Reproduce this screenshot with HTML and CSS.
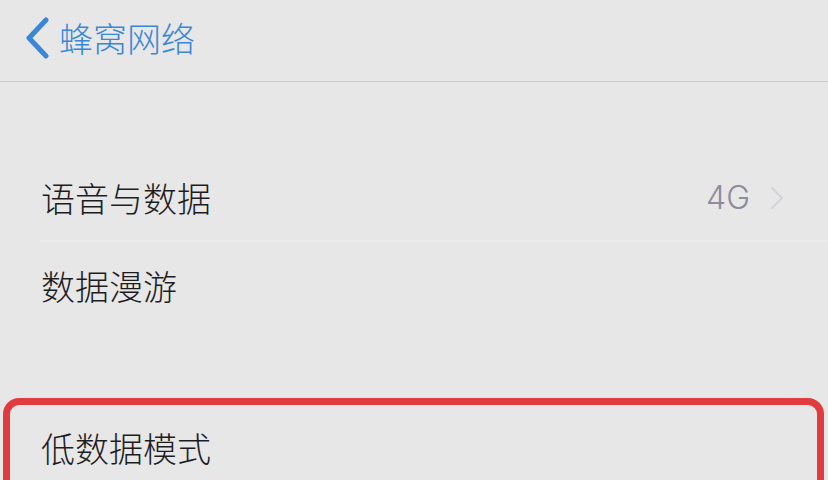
FILE: index.html
```html
<!DOCTYPE html>
<html lang="zh-CN">
<head>
<meta charset="utf-8">
<title>蜂窝网络</title>
<link rel="stylesheet" href="styles.css">
</head>
<body>
<header class="nav">
  <div class="back">
    <svg class="back-icon" width="26" height="42" viewBox="0 0 26 42">
      <path d="M22 3 L5 21 L22 39" fill="none" stroke="#3a87d6" stroke-width="5" stroke-linecap="round" stroke-linejoin="round"/>
    </svg>
    <span class="back-label">蜂窝网络</span>
  </div>
</header>
<main class="content">
  <section class="group">
    <div class="row sep">
      <span class="label">语音与数据</span>
      <span class="detail">
        <span class="value">4G</span>
        <svg class="chev" width="14" height="24" viewBox="0 0 14 24">
          <path d="M2 2 L12 12 L2 22" fill="none" stroke="#d2d2d8" stroke-width="2" stroke-linecap="round" stroke-linejoin="round"/>
        </svg>
      </span>
    </div>
    <div class="row">
      <span class="label">数据漫游</span>
    </div>
  </section>
  <section class="highlight">
    <div class="row inner">
      <span class="label">低数据模式</span>
    </div>
  </section>
</main>
</body>
</html>
```

FILE: styles.css
```css
html, body {
  margin: 0;
  padding: 0;
}
body {
  width: 828px;
  height: 480px;
  overflow: hidden;
  background: #e7e7e7;
  font-family: "Noto Sans CJK SC", "Noto Sans", sans-serif;
  font-weight: 300;
  color: #1d1d1f;
}
.nav {
  height: 82px;
  border-bottom: 1px solid #cbcbd8;
  display: flex;
  align-items: center;
  box-sizing: border-box;
}
.back {
  display: flex;
  align-items: center;
  padding-left: 24px;
  margin-top: -6px;
}
.back-icon {
  display: block;
}
.back-label {
  margin-left: 9px;
  font-size: 34px;
  line-height: 1;
  color: #3a87d6;
}
.content {
  display: flex;
  flex-direction: column;
}
.group {
  margin-top: 72px;
}
.row {
  height: 88px;
  display: flex;
  align-items: center;
  justify-content: space-between;
  padding-left: 41px;
  padding-right: 44px;
  box-sizing: border-box;
  position: relative;
}
.row.sep::after {
  content: "";
  position: absolute;
  left: 41px;
  right: 0;
  bottom: 0;
  height: 2px;
  background: #ebebeb;
}
.label {
  font-size: 34px;
  line-height: 1;
}
.detail {
  display: flex;
  align-items: center;
  gap: 20px;
}
.value {
  font-family: "Inter", "Liberation Sans", sans-serif;
  font-weight: 300;
  font-size: 32px;
  line-height: 1;
  color: #8c8c9c;
}
.chev {
  display: block;
}
.highlight {
  margin-top: 68px;
  margin-left: 3px;
  width: 821px;
  height: 82px;
  box-sizing: border-box;
  border: 7px solid #e03b3f;
  border-bottom: none;
  border-radius: 16px 16px 0 0;
}
.row.inner {
  height: 86px;
  padding-left: 31px;
}
```
